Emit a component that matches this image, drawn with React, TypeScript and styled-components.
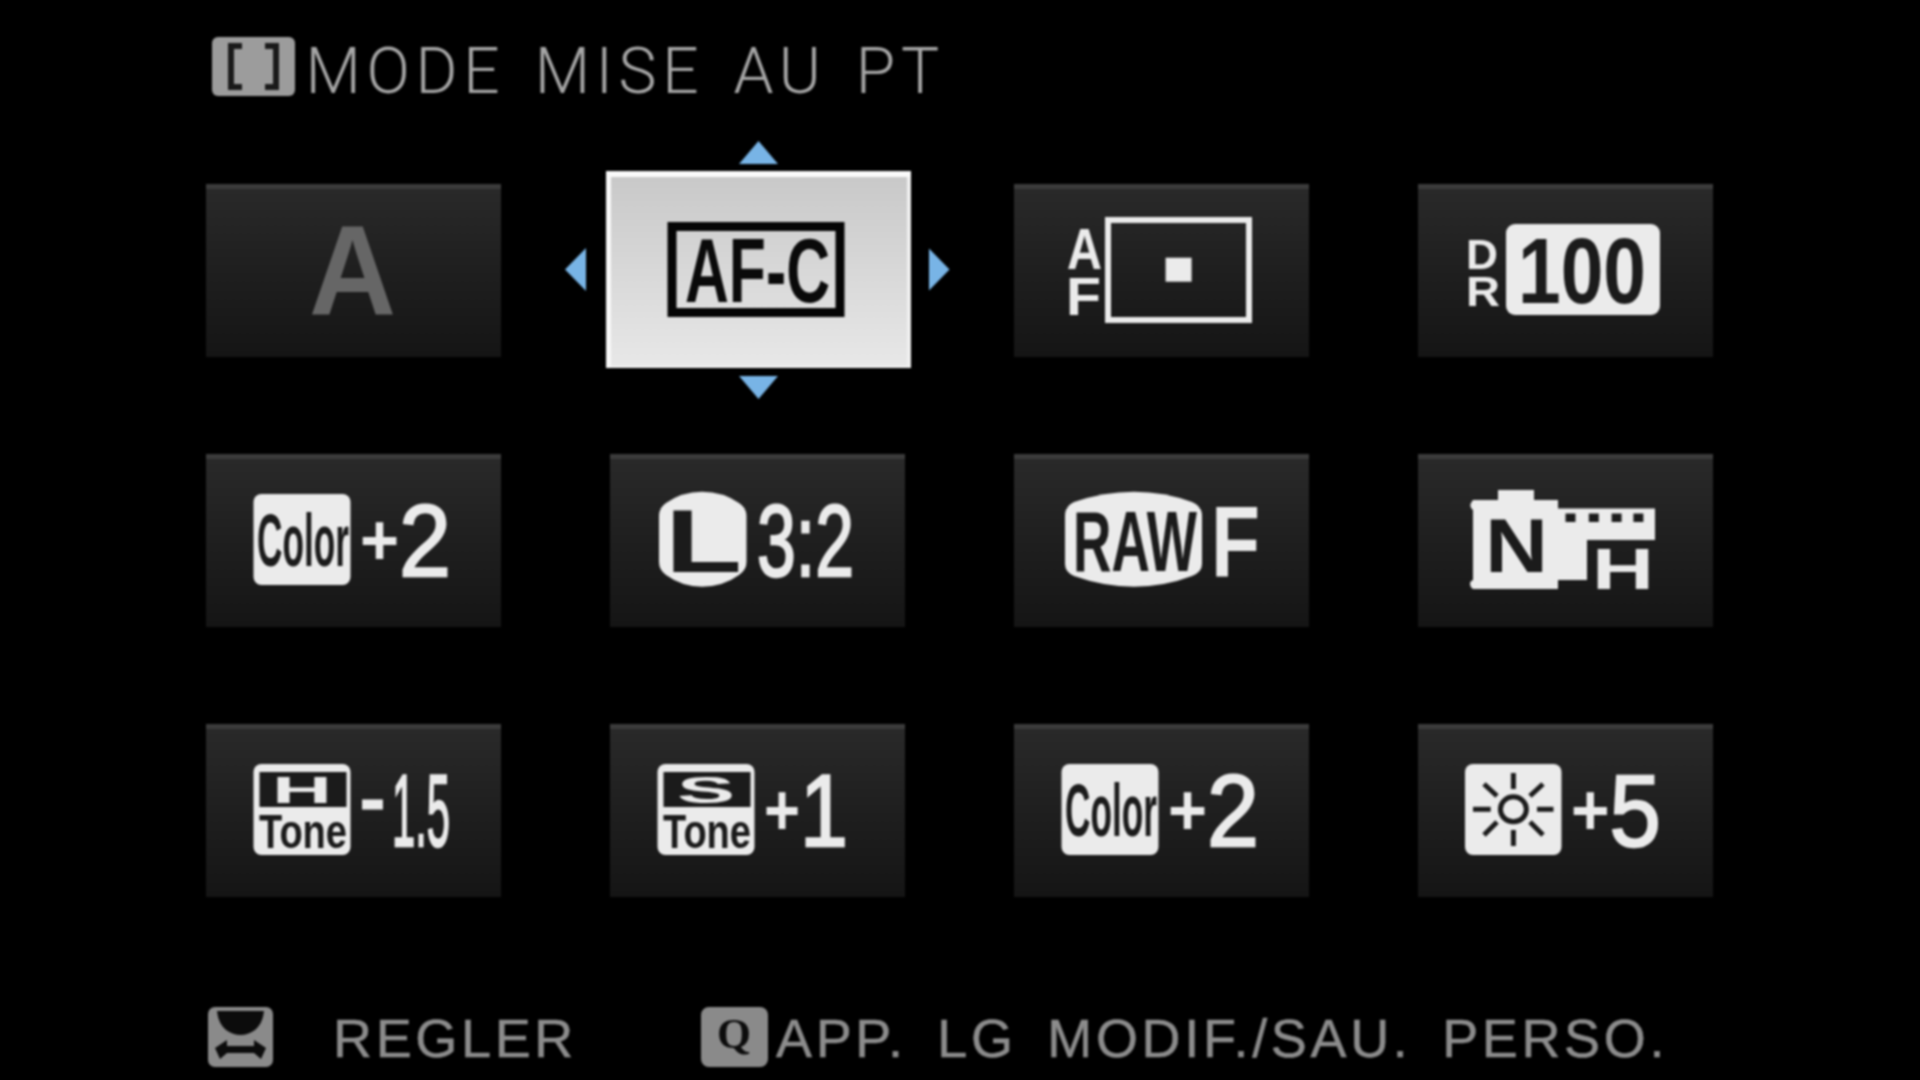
import React from 'react';
import styled, { createGlobalStyle } from 'styled-components';

const Global = createGlobalStyle`
  html, body { margin: 0; padding: 0; background: #000; }
  #root { width: 1920px; height: 1080px; overflow: hidden; }
`;

const Screen = styled.main`
  width: 1920px;
  height: 1080px;
  box-sizing: border-box;
  background: #000;
  padding: 38px 0 0 206px;
  display: flex;
  flex-direction: column;
  filter: blur(0.8px);
  font-family: Roboto, "Liberation Sans", sans-serif;
`;

const Header = styled.header`
  display: flex;
  align-items: flex-end;
  gap: 11px;
  height: 59px;
  padding-left: 5.5px;
`;

const Title = styled.h1`
  margin: 0;
  font-size: 64px;
  line-height: 59px;
  font-weight: 300;
  color: #a6a6a6;
  letter-spacing: 5.7px;
  word-spacing: 8px;
  white-space: nowrap;
  position: relative;
  top: 3.5px;
`;

const Grid = styled.section`
  display: grid;
  grid-template-columns: repeat(4, 295px);
  grid-auto-rows: 173px;
  column-gap: 109px;
  row-gap: 97px;
  margin-top: 87px;
`;

const Tile = styled.div<{ $selected?: boolean }>`
  position: relative;
  background: ${p => p.$selected
    ? 'linear-gradient(180deg, #c8c8c8 0%, #d6d6d6 45%, #e8e8e8 100%)'
    : 'linear-gradient(180deg, #2a2a2a 0%, #1f1f1f 50%, #151515 100%)'};
  box-shadow: ${p => p.$selected
    ? 'inset 0 6px 0 #fafafa, inset 5px 0 0 #f8f8f8, inset -4px 0 0 #f0f0f0, inset 0 -3px 0 #eeeeee'
    : 'inset 0 5px 0 #3b3b3b'};
  margin: ${p => (p.$selected ? '-13px -5.5px -11px -4px' : '0')};
`;

const IconSvg = styled.svg`
  display: block;
  width: 100%;
  height: 100%;
`;

const Arrow = styled.span<{ $dir: 'up' | 'down' | 'left' | 'right' }>`
  position: absolute;
  background: #78b4e6;
  width: ${p => (p.$dir === 'up' || p.$dir === 'down' ? '39px' : '21px')};
  height: ${p => (p.$dir === 'up' || p.$dir === 'down' ? '23px' : '43px')};
  clip-path: ${p => ({
    up: 'polygon(50% 0, 100% 100%, 0 100%)',
    down: 'polygon(0 0, 100% 0, 50% 100%)',
    left: 'polygon(100% 0, 100% 100%, 0 50%)',
    right: 'polygon(0 0, 100% 50%, 0 100%)',
  }[p.$dir])};
  ${p => p.$dir === 'up' && 'top: -30px; left: 133px;'}
  ${p => p.$dir === 'down' && 'bottom: -31px; left: 133px;'}
  ${p => p.$dir === 'left' && 'left: -41px; top: 77px;'}
  ${p => p.$dir === 'right' && 'right: -39px; top: 77px;'}
`;

const Footer = styled.footer`
  display: flex;
  align-items: center;
  height: 60px;
  margin-top: 110px;
  padding-left: 2px;
`;

const Badge = styled.svg<{ $w: number; $left?: number }>`
  display: block;
  width: ${p => p.$w}px;
  height: 60px;
  flex: none;
  margin-left: ${p => p.$left ?? 0}px;
`;

const FootText = styled.span<{ $left: number }>`
  margin-left: ${p => p.$left}px;
  font-family: "Liberation Sans", sans-serif;
  font-size: 54px;
  color: #8c8c8c;
  -webkit-text-stroke: 0.5px #8c8c8c;
  letter-spacing: 3.65px;
  word-spacing: 12px;
  white-space: nowrap;
  line-height: 60px;
  position: relative;
  top: 1px;
`;

const Glyph = styled.text<{ $fill: string; $family: string; $bold: boolean; $stroke: number }>`
  fill: ${p => p.$fill};
  stroke: ${p => p.$fill};
  stroke-width: ${p => p.$stroke}px;
  font-family: ${p => p.$family};
  font-weight: ${p => (p.$bold ? 700 : 400)};
`;

const PlusSpan = styled.tspan`
  font-family: "Liberation Sans", sans-serif;
  font-weight: 700;
  stroke-width: 0;
`;

const DigitSpan = styled.tspan`
  font-weight: 400;
  stroke-width: 2.4px;
`;

const NARROW = '"Liberation Sans Narrow", "Liberation Sans", sans-serif';
const WIDE = '"Liberation Sans", sans-serif';
const LIGHT = '#ebebeb';
const DARK = '#1b1b1b';

type TProps = {
  x: number; y0: number; y1: number; x1: number; children: string;
  fill?: string; family?: string; bold?: boolean; stroke?: number;
};

/** Real text fitted to a box: x..x1 wide, cap height y0..y1. */
const T = ({ x, x1, y0, y1, children, fill = LIGHT, family = NARROW, bold = true, stroke = 0 }: TProps) => (
  <Glyph
    x={x}
    y={y1}
    fontSize={(y1 - y0) / 0.716}
    textLength={x1 - x}
    lengthAdjust="spacingAndGlyphs"
    $fill={fill}
    $family={family}
    $bold={bold}
    $stroke={stroke}
  >
    {children}
  </Glyph>
);

/** A "+n" value: one text, with a smaller raised plus sign. */
const Signed = ({ x, x1, digit }: { x: number; x1: number; digit: string }) => (
  <Glyph
    x={x}
    y={111}
    textLength={x1 - x}
    lengthAdjust="spacingAndGlyphs"
    $fill={LIGHT}
    $family={NARROW}
    $bold={false}
    $stroke={0}
  >
    <PlusSpan fontSize={73}>+</PlusSpan>
    <DigitSpan fontSize={102} dy={11}>{digit}</DigitSpan>
  </Glyph>
);

const Icon = ({ w = 295, h = 173, children }: { w?: number; h?: number; children: React.ReactNode }) => (
  <IconSvg viewBox={`0 0 ${w} ${h}`}>{children}</IconSvg>
);

const Num = ({ x, x1, children }: { x: number; x1: number; children: string }) => (
  <T x={x} x1={x1} y0={49} y1={122} bold={false} stroke={2.4}>{children}</T>
);

const ColorIcon = () => (
  <Icon>
    <rect x={47.5} y={40} width={97} height={91} rx={8} fill={LIGHT} />
    <T x={51} x1={143} y0={59} y1={112} fill={DARK}>Color</T>
    <Signed x={154} x1={245} digit="2" />
  </Icon>
);

const ToneBox = ({ letter, x, x1 }: { letter: string; x: number; x1: number }) => (
  <>
    <rect x={47.5} y={40} width={97} height={91} rx={8} fill={LIGHT} />
    <rect x={53.5} y={48} width={87} height={35} fill={DARK} />
    <T x={x} x1={x1} y0={52} y1={79} family={WIDE}>{letter}</T>
    <T x={53} x1={141} y0={90} y1={124} fill={DARK}>Tone</T>
  </>
);

const sunRays = [
  [95.4, 49, 95.4, 65], [95.4, 106, 95.4, 122], [55, 85.3, 72.7, 85.3], [119, 85.3, 135.5, 85.3],
  [66, 60, 79, 72], [125, 60, 112, 72], [66, 111, 79, 98], [125, 111, 112, 98],
];

const tiles: React.ReactNode[] = [
  <Icon key="a"><T x={103} x1={190} y0={40} y1={131} fill="#666666" family={WIDE}>A</T></Icon>,
  <Icon key="afc" w={304.5} h={197}>
    <rect x={66} y={55.5} width={168} height={86} fill="none" stroke="#050505" strokeWidth={9} />
    <T x={79} x1={224} y0={66} y1={131} fill="#0a0a0a">AF-C</T>
  </Icon>,
  <Icon key="af">
    <rect x={94} y={36} width={141} height={100} fill="none" stroke={LIGHT} strokeWidth={6} />
    <rect x={151.6} y={73.7} width={26} height={24} fill={LIGHT} />
    <T x={53} x1={88} y0={44} y1={85} family={WIDE}>A</T>
    <T x={52} x1={87} y0={93} y1={131} family={WIDE}>F</T>
  </Icon>,
  <Icon key="dr">
    <rect x={88} y={40} width={154} height={91} rx={9} fill={LIGHT} />
    <T x={48} x1={80} y0={54} y1={85} family={WIDE}>D</T>
    <T x={48} x1={82} y0={91} y1={122} family={WIDE}>R</T>
    <T x={100} x1={228} y0={52} y1={119} fill={DARK} family={WIDE}>100</T>
  </Icon>,
  <ColorIcon key="c1" />,
  <Icon key="l">
    <path d="M49 62 Q49 54 56 49 Q72 37.7 92 37.7 Q113 37.7 129 49 Q136.5 54 136.5 62 V108 Q136.5 116 129 121 Q113 132.7 92 132.7 Q72 132.7 56 121 Q49 116 49 108 Z" fill={LIGHT} />
    <T x={55} x1={132} y0={54} y1={118} fill={DARK}>L</T>
    <T x={147} x1={244} y0={49} y1={122} bold={false} stroke={2.4}>3:2</T>
  </Icon>,
  <Icon key="raw">
    <path d="M51 62 Q51 52 60 48 Q90 37.7 120 37.7 Q150 37.7 178 48 Q188 52 188 62 V110 Q188 118 178 122 Q150 132.7 120 132.7 Q90 132.7 60 122 Q51 118 51 110 Z" fill={LIGHT} />
    <T x={59} x1={183} y0={56} y1={117} fill={DARK}>RAW</T>
    <T x={197} x1={246} y0={50} y1={122} family={WIDE}>F</T>
  </Icon>,
  <Icon key="film">
    <path d="M80 46 V36 H116 V46 H140 V54.5 H237 V86 H169 V126 H140 V135 H55 Q52 133 52 130 Q52 127 55 126 V56 Q51 53 53 49 L55 46 Z" fill={LIGHT} />
    {[147.5, 170.8, 193.6, 215.4].map(x => <rect key={x} x={x} y={59.5} width={10} height={8.5} fill={DARK} />)}
    <T x={67} x1={130} y0={63} y1={118} fill={DARK} family={WIDE}>N</T>
    <T x={174} x1={236} y0={94} y1={135} family={WIDE}>H</T>
  </Icon>,
  <Icon key="h">
    <ToneBox letter="H" x={66} x1={126} />
    <T x={154} x1={179} y0={40} y1={105} bold={false} stroke={3}>-</T>
    <Num x={186} x1={244}>1.5</Num>
  </Icon>,
  <Icon key="s">
    <ToneBox letter="S" x={67} x1={125} />
    <Signed x={154} x1={238} digit="1" />
  </Icon>,
  <ColorIcon key="c2" />,
  <Icon key="sun">
    <rect x={47} y={40} width={96.5} height={91} rx={8} fill={LIGHT} />
    <ellipse cx={95.4} cy={85.3} rx={13} ry={12.5} fill="none" stroke={DARK} strokeWidth={5} />
    {sunRays.map(([a, b, c, d]) => <line key={`${a}${b}${c}${d}`} x1={a} y1={b} x2={c} y2={d} stroke={DARK} strokeWidth={5} />)}
    <Signed x={153} x1={243} digit="5" />
  </Icon>,
];

export default function App() {
  return (
    <>
      <Global />
      <Screen>
        <Header>
          <Badge $w={83} viewBox="0 0 83 60">
            <rect x={0} y={0} width={83} height={59} rx={6} fill="#9c9c9c" />
            <path d="M30 9 H19 V50 H30 M53 9 H64 V50 H53" fill="none" stroke="#1a1a1a" strokeWidth={6} />
          </Badge>
          <Title>MODE MISE AU PT</Title>
        </Header>
        <Grid>
          {tiles.map((icon, i) => (
            <Tile key={i} $selected={i === 1}>
              {icon}
              {i === 1 && (
                <>
                  <Arrow $dir="up" />
                  <Arrow $dir="down" />
                  <Arrow $dir="left" />
                  <Arrow $dir="right" />
                </>
              )}
            </Tile>
          ))}
        </Grid>
        <Footer>
          <Badge $w={65} viewBox="0 0 65 60">
            <rect x={0} y={0} width={65} height={60} rx={7} fill="#8a8a8a" />
            <path d="M9 4 H56 Q55 16 47 23 Q40 28 32.5 28 Q25 28 18 23 Q10 16 9 4 Z" fill="#0c0c0c" />
            <path d="M7 41 L19 33 L19 39 H46 V33 L58 41 L53 52 L46 46 H19 L12 52 Z" fill="#0c0c0c" />
          </Badge>
          <FootText $left={60}>REGLER</FootText>
          <Badge $w={67} $left={124} viewBox="0 0 67 60">
            <rect x={0} y={0} width={67} height={60} rx={8} fill="#8a8a8a" />
            <T x={16} x1={50} y0={11} y1={41} fill="#0c0c0c" family={'"Liberation Serif", serif'}>Q</T>
          </Badge>
          <FootText $left={8}>APP. LG MODIF./SAU. PERSO.</FootText>
        </Footer>
      </Screen>
    </>
  );
}
